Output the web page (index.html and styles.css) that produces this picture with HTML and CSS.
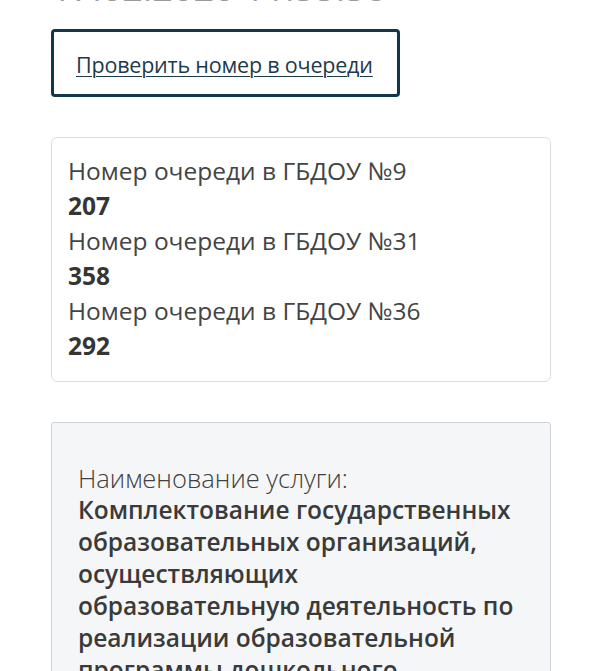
FILE: index.html
```html
<!DOCTYPE html>
<html lang="ru">
<head>
<meta charset="utf-8">
<link rel="stylesheet" href="styles.css">
</head>
<body>
<main class="page">
  <h1 class="title">17.02.2020 11:55:38</h1>
  <a class="check-btn" href="#"><span>Проверить номер в очереди</span></a>
  <section class="queue-card">
    <div class="q-label">Номер очереди в ГБДОУ №9</div>
    <div class="q-value">207</div>
    <div class="q-label">Номер очереди в ГБДОУ №31</div>
    <div class="q-value">358</div>
    <div class="q-label">Номер очереди в ГБДОУ №36</div>
    <div class="q-value">292</div>
  </section>
  <section class="service-card">
    <div class="s-label">Наименование услуги:</div>
    <div class="s-value">Комплектование государственных образовательных организаций, осуществляющих образовательную деятельность по реализации образовательной программы дошкольного образования</div>
  </section>
</main>
</body>
</html>
```
FILE: styles.css
```css
html, body {
  margin: 0;
  padding: 0;
  background: #ffffff;
}
body {
  font-family: "Open Sans", "Noto Sans", sans-serif;
  color: #3b3b3b;
  overflow: hidden;
}
.page {
  padding: 0 50px 0 51px;
  display: flex;
  flex-direction: column;
  align-items: flex-start;
}
.title {
  margin: -32px 0 0 0;
  font-size: 36px;
  line-height: 40px;
  font-weight: 400;
  color: #9a9a9a;
  white-space: nowrap;
}
.check-btn {
  margin-top: 21px;
  box-sizing: border-box;
  width: 349px;
  height: 68px;
  border: 3px solid #11384a;
  border-radius: 4px;
  padding: 4px 22px 0 22px;
  display: flex;
  align-items: center;
  text-decoration: none;
}
.check-btn span {
  font-size: 21.5px;
  line-height: 26px;
  color: #1d3a4c;
  text-decoration: underline;
  text-underline-offset: 3px;
  text-decoration-thickness: 1px;
  white-space: nowrap;
  letter-spacing: -0.2px;
}
.queue-card {
  margin-top: 40px;
  box-sizing: border-box;
  width: 500px;
  border: 1px solid #dedede;
  border-radius: 6px;
  padding: 15px 16px 18px 16px;
}
.q-label {
  font-size: 24.5px;
  line-height: 35px;
  color: #444;
  white-space: nowrap;
}
.q-value {
  font-size: 24.5px;
  line-height: 35px;
  font-weight: 700;
  color: #353535;
}
.service-card {
  margin-top: 40px;
  box-sizing: border-box;
  width: 500px;
  background: #f5f6f7;
  border: 1px solid #cfd3d7;
  border-radius: 3px;
  padding: 39px 26px 30px 26px;
}
.s-label {
  font-size: 25.5px;
  line-height: 32px;
  font-weight: 300;
  color: #404040;
}
.s-value {
  max-width: 440px;
  font-size: 24.5px;
  line-height: 32px;
  font-weight: 600;
  color: #3a3a3a;
}
```
